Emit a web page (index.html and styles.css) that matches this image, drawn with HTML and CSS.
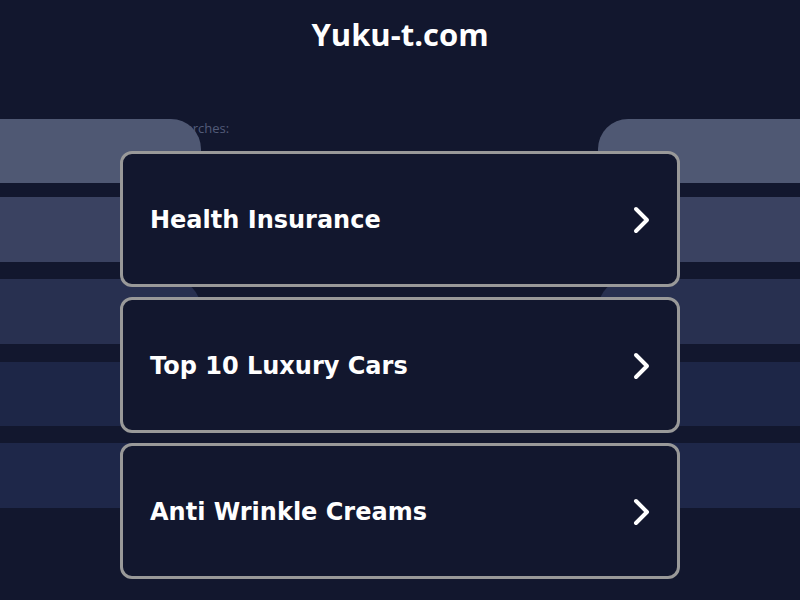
FILE: index.html
```html
<!DOCTYPE html>
<html lang="en">
<head>
<meta charset="utf-8">
<title>Yuku-t.com</title>
<link rel="stylesheet" href="styles.css">
</head>
<body>
<div class="ghost" aria-hidden="true">
  <div class="ghost-label">Related Searches:</div>
  <div class="ghost-row r1"><div class="gl"></div><div class="gr"></div></div>
  <div class="ghost-row r2"><div class="gl"></div><div class="gr"></div></div>
  <div class="ghost-row r3"><div class="gl"></div><div class="gr"></div></div>
  <div class="ghost-row r4"><div class="gl"></div><div class="gr"></div></div>
  <div class="ghost-row r5"><div class="gl"></div><div class="gr"></div></div>
</div>
<header class="site-header">
  <h1 class="site-title">Yuku-t.com</h1>
</header>
<main class="links">
  <a class="link-card" href="#"><span class="link-text">Health Insurance</span>
    <svg class="chev" viewBox="0 0 20 28" width="20" height="28"><path d="M4 3 L15 14 L4 25" fill="none" stroke="#fff" stroke-width="4" stroke-linecap="round" stroke-linejoin="round"/></svg></a>
  <a class="link-card" href="#"><span class="link-text">Top 10 Luxury Cars</span>
    <svg class="chev" viewBox="0 0 20 28" width="20" height="28"><path d="M4 3 L15 14 L4 25" fill="none" stroke="#fff" stroke-width="4" stroke-linecap="round" stroke-linejoin="round"/></svg></a>
  <a class="link-card" href="#"><span class="link-text">Anti Wrinkle Creams</span>
    <svg class="chev" viewBox="0 0 20 28" width="20" height="28"><path d="M4 3 L15 14 L4 25" fill="none" stroke="#fff" stroke-width="4" stroke-linecap="round" stroke-linejoin="round"/></svg></a>
</main>
</body>
</html>
```

FILE: styles.css
```css
html, body {
  margin: 0;
  padding: 0;
}
body {
  background: #12172e;
  width: 800px;
  height: 600px;
  overflow: hidden;
  position: relative;
  font-family: "DejaVu Sans", Verdana, sans-serif;
}
.ghost {
  position: absolute;
  left: 0;
  top: 119px;
  width: 800px;
  display: flex;
  flex-direction: column;
  z-index: 0;
}
.ghost-label {
  height: 0;
  overflow: visible;
  padding-left: 122px;
  font-family: "Open Sans", sans-serif;
  font-size: 13px;
  line-height: 18px;
  color: #525b79;
}
.ghost-row {
  height: 65px;
  display: flex;
  justify-content: space-between;
}
.r1 { height: 64px; }
.r2 { margin-top: 14px; }
.r3 { margin-top: 17px; }
.r4 { margin-top: 18px; height: 64px; }
.r5 { margin-top: 17px; }
.gl, .gr {
  width: 201px;
  height: 100%;
}
.gl { border-radius: 0 30px 30px 0; }
.gr { width: 202px; border-radius: 30px 0 0 30px; }
.r1 .gl, .r1 .gr { background: #4f5873; }
.r2 .gl, .r2 .gr { background: #3a4261; }
.r3 .gl, .r3 .gr { background: #283050; }
.r4 .gl, .r4 .gr { background: #1d2647; }
.r5 .gl, .r5 .gr { background: #1e2749; }
.site-header {
  position: relative;
  z-index: 1;
  height: 70px;
  display: flex;
  justify-content: center;
}
.site-title {
  margin: 14px 0 0;
  font-family: "Open Sans", sans-serif;
  font-weight: 700;
  font-size: 31px;
  line-height: 40px;
  color: #ffffff;
}
.links {
  position: relative;
  z-index: 1;
  width: 560px;
  margin: 81px auto 0;
  display: flex;
  flex-direction: column;
  gap: 10px;
}
.link-card {
  box-sizing: border-box;
  height: 136px;
  border: 3px solid #999999;
  border-radius: 12px;
  background: #12172e;
  display: flex;
  align-items: center;
  justify-content: space-between;
  padding: 2px 25px 0 27px;
  text-decoration: none;
  color: #ffffff;
}
.link-text {
  font-weight: 700;
  font-size: 24px;
  color: #ffffff;
}
.chev {
  display: block;
}
```
